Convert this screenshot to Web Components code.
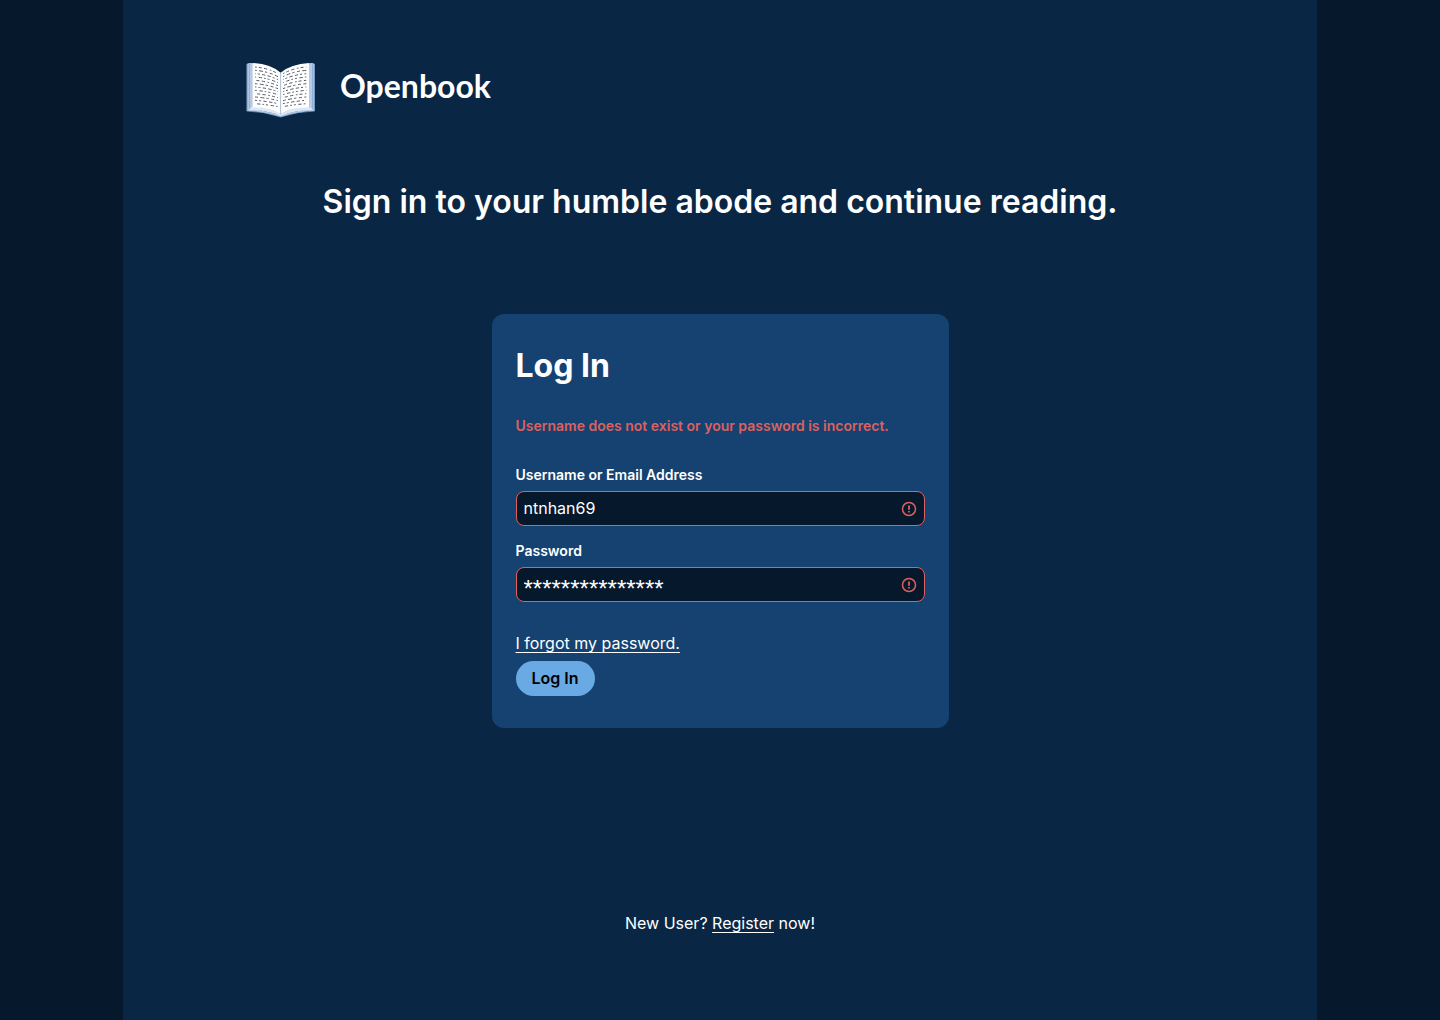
<!DOCTYPE html>
<html lang="en">
<head>
<meta charset="utf-8">
<meta name="viewport" content="width=device-width, initial-scale=1">
<title>Openbook</title>
<style>
  :root {
    --ink: #05182c;
    --page: #092645;
    --card: #154270;
    --danger: #dd6060;
    --accent: #6aaae4;
    --text: #ffffff;
  }
  body { margin: 0; background: var(--ink); color: var(--text); font: 400 16px/20px Inter, sans-serif; }
</style>
</head>
<body>
<login-page>
  <book-brand slot="brand">Openbook</book-brand>
  <span slot="headline">Sign in to your humble abode and continue reading.</span>
  <login-card></login-card>
  <register-note slot="footer"></register-note>
</login-page>
<script>
const define = (name, html, setup) => customElements.define(name, class extends HTMLElement {
  constructor() {
    super();
    const root = this.attachShadow({ mode: "open" });
    const template = document.createElement("template");
    template.innerHTML = html;
    root.append(template.content.cloneNode(true));
    if (setup) setup(this, root);
  }
});

define("login-page", `
  <style>
    :host { display: block; }
    main { box-sizing: border-box; display: flex; flex-direction: column; align-items: center;
      width: 100%; max-width: 1194px; min-height: 100vh; margin: 0 auto; padding: 54px 24px 76px; background: var(--page); }
    header { width: 100%; max-width: 952px; }
    h1 { margin: 56px 0 0; font-size: 32px; line-height: 40px; font-weight: 600; text-align: center; }
    section { width: 100%; max-width: 457px; margin: 92px 0 185px; }
  </style>
  <main>
    <header><slot name="brand"></slot></header>
    <h1><slot name="headline"></slot></h1>
    <section><slot></slot></section>
    <footer><slot name="footer"></slot></footer>
  </main>`);

define("book-brand", `
  <style>
    :host { display: flex; align-items: center; gap: 24px; }
    svg { width: 72px; height: 72px; flex: none; }
    span { padding-bottom: 8px; font: 700 32px/40px Lato, sans-serif; }
  </style>
  <svg viewBox="24 12 216 216" aria-hidden="true">
    <path d="M32 42Q40 37 50 40V176L134 194L219 176V40Q229 37 236 42V183Q190 184 134 201Q80 184 32 183Z" fill="#b6cae5"/>
    <path d="M34 43V181M40 42V180M230 43V180M235 44V181" stroke="#6f9bd0" stroke-width="2"/>
    <path d="M37 179L52 168Q103 173 134 192Q166 173 216 168L232 179Q180 180 134 197Q89 180 37 179Z" fill="#dce8f6"/>
    <path d="M49 39Q103 42 134 68V193Q102 172 49 172Z" fill="#fff"/>
    <path d="M219 39Q165 42 134 68V193Q166 172 219 172Z" fill="#fff"/>
    <path d="M134 68V194" stroke="#b6c4dc" stroke-width="3"/>
    <path d="M32 183Q84 184 134 201Q184 184 236 183" fill="none" stroke="#7fa5d2" stroke-width="2"/>
    <g id="print" fill="none" stroke="#555b66" stroke-width="3"></g>
  </svg>
  <span><slot></slot></span>`, (host, root) => {
  const print = root.getElementById("print");
  const dashes = ["5 6 9 7 10 8", "9 7 12 6 7 8", "10 6 6 7 10 7", "6 8 10 6 5 6"];
  for (let i = 0; i < 12; i++) {
    const y = 51 + i * 10;
    const bow = 20 - i;
    for (const d of [`M57 ${y}Q96 ${y + 3} 126 ${y + bow}`, `M141 ${y + bow}Q172 ${y + 3} 211 ${y}`]) {
      const line = document.createElementNS("http://www.w3.org/2000/svg", "path");
      line.setAttribute("d", d);
      line.setAttribute("stroke-dasharray", dashes[i % 4]);
      line.setAttribute("stroke-dashoffset", (i * 13) % 9);
      print.append(line);
    }
  }
});

define("login-card", `
  <style>
    :host { display: block; }
    form { display: flex; flex-direction: column; align-items: flex-start; padding: 32px 24px; border-radius: 12px; background: var(--card); }
    h2 { margin: 0; font-size: 32px; line-height: 39px; font-weight: 700; }
    p { margin: 32px 0; font-size: 14px; line-height: 17px; font-weight: 600; color: var(--danger); }
    .fields { display: flex; flex-direction: column; gap: 16px; width: 100%; }
    a { margin: 32px 0 8px; line-height: 19px; color: inherit; text-underline-offset: 3px; }
    button { height: 35px; padding: 0 16px; border: 0; border-radius: 18px; background: var(--accent); color: #000; font: 600 16px/19px Inter, sans-serif; }
  </style>
  <form>
    <h2>Log In</h2>
    <p role="alert">Username does not exist or your password is incorrect.</p>
    <div class="fields">
      <text-field label="Username or Email Address" value="ntnhan69"></text-field>
      <text-field label="Password" value="***************" masked></text-field>
    </div>
    <a href="#forgot">I forgot my password.</a>
    <button type="button">Log In</button>
  </form>`);

define("text-field", `
  <style>
    :host { display: flex; flex-direction: column; gap: 8px; }
    label { font-size: 14px; line-height: 17px; font-weight: 600; }
    div { box-sizing: border-box; display: flex; align-items: center; height: 35px; padding: 0 7px; gap: 8px;
      border: 1px solid var(--danger); border-radius: 8px; background: var(--ink); }
    input { flex: 1; min-width: 0; padding: 0; border: 0; outline: 0; background: none; color: inherit; font: inherit; line-height: 19px; }
    :host([masked]) input { padding-top: 8px; font: 400 24px/24px "Liberation Sans", Arial, sans-serif; }
    svg { width: 16px; height: 16px; flex: none; fill: none; stroke: var(--danger); }
  </style>
  <label for="entry"></label>
  <div>
    <input id="entry" type="text" aria-invalid="true">
    <svg viewBox="0 0 16 16" aria-hidden="true"><circle cx="8" cy="8" r="6.5" stroke-width="1.5"/><path d="M8 4.5V8.7M8 10V11.6" stroke-width="1.8"/></svg>
  </div>`);
for (const field of document.querySelector("login-card").shadowRoot.querySelectorAll("text-field")) {
  field.shadowRoot.querySelector("label").textContent = field.getAttribute("label");
  field.shadowRoot.querySelector("input").value = field.getAttribute("value");
}

define("register-note", `
  <style>
    :host { display: block; }
    a { color: inherit; text-underline-offset: 3px; }
  </style>
  New User? <a href="#register">Register</a> now!`);
</script>
</body>
</html>
